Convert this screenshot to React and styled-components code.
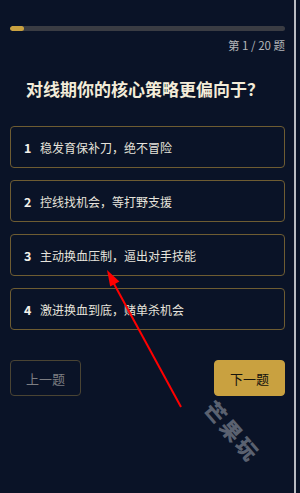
import React from "react";
import styled, { createGlobalStyle } from "styled-components";

const Global = createGlobalStyle`
  html, body { margin: 0; padding: 0; background: #0a1327; }
  body { font-family: "Noto Sans CJK SC", "Noto Sans", sans-serif; }
`;

const Page = styled.div`
  position: relative;
  width: 296px;
  height: 493px;
  box-sizing: border-box;
  padding: 26px 9px 0 10px;
  background: #0a1327;
  border-right: 2px solid #b9bcc2;
  display: flex;
  flex-direction: column;
  overflow: hidden;
`;

const Track = styled.div`
  height: 5px;
  border-radius: 3px;
  background: #3a3c43;
  overflow: hidden;
`;

const Fill = styled.div`
  height: 100%;
  border-radius: 3px;
  background: #c9a140;
`;

const Counter = styled.div`
  margin-top: 7px;
  text-align: right;
  font-size: 11.5px;
  line-height: 14px;
  color: #b4b6ba;
`;

const Title = styled.h1`
  margin: 25px 0 0;
  text-align: center;
  font-size: 17px;
  line-height: 24px;
  font-weight: 700;
  color: #f3ecd9;
  padding-right: 5px;
`;

const Options = styled.div`
  margin-top: 25px;
  display: flex;
  flex-direction: column;
  gap: 12px;
`;

const Option = styled.div`
  height: 42px;
  box-sizing: border-box;
  border: 1px solid #6e5c32;
  border-radius: 4px;
  display: flex;
  align-items: center;
  padding-left: 13px;
  gap: 8px;
  color: #e6e3dc;
  font-size: 12px;
`;

const Num = styled.span`
  font-weight: 700;
  font-size: 12.5px;
  color: #f3f0ea;
  width: 8px;
`;

const Actions = styled.div`
  margin-top: 30px;
  display: flex;
  justify-content: space-between;
`;

const Btn = styled.button`
  width: 71px;
  height: 36px;
  box-sizing: border-box;
  border-radius: 4px;
  font-family: inherit;
  font-size: 13px;
  cursor: pointer;
  border: 1px solid ${(p) => (p.$primary ? "#c9a140" : "#4a4433")};
  background: ${(p) => (p.$primary ? "#c9a140" : "transparent")};
  color: ${(p) => (p.$primary ? "#15130e" : "#7d7e82")};
`;

const Watermark = styled.div`
  position: absolute;
  left: 233px;
  top: 431px;
  transform: translate(-50%, -50%) rotate(49deg);
  font-size: 21px;
  font-weight: 900;
  letter-spacing: 3px;
  color: #5a6170;
  white-space: nowrap;
  pointer-events: none;
`;

const Overlay = styled.svg`
  position: absolute;
  left: 0;
  top: 0;
  pointer-events: none;
`;

const options = [
  "稳发育保补刀，绝不冒险",
  "控线找机会，等打野支援",
  "主动换血压制，逼出对手技能",
  "激进换血到底，赌单杀机会",
];

export default function App() {
  return (
    <>
      <Global />
      <Page>
        <Track>
          <Fill style={{ width: `${(1 / 20) * 100}%` }} />
        </Track>
        <Counter>第 1 / 20 题</Counter>
        <Title>对线期你的核心策略更偏向于？</Title>
        <Options>
          {options.map((t, i) => (
            <Option key={i}>
              <Num>{i + 1}</Num>
              <span>{t}</span>
            </Option>
          ))}
        </Options>
        <Actions>
          <Btn>上一题</Btn>
          <Btn $primary>下一题</Btn>
        </Actions>
        <Watermark>芒果玩</Watermark>
        <Overlay width="296" height="493" viewBox="0 0 296 493">
          <line x1="181" y1="407" x2="113" y2="282" stroke="#ff0000" strokeWidth="2" />
          <polygon points="107,270 119.4,281.6 110.2,286.4" fill="#ff0000" />
        </Overlay>
      </Page>
    </>
  );
}
